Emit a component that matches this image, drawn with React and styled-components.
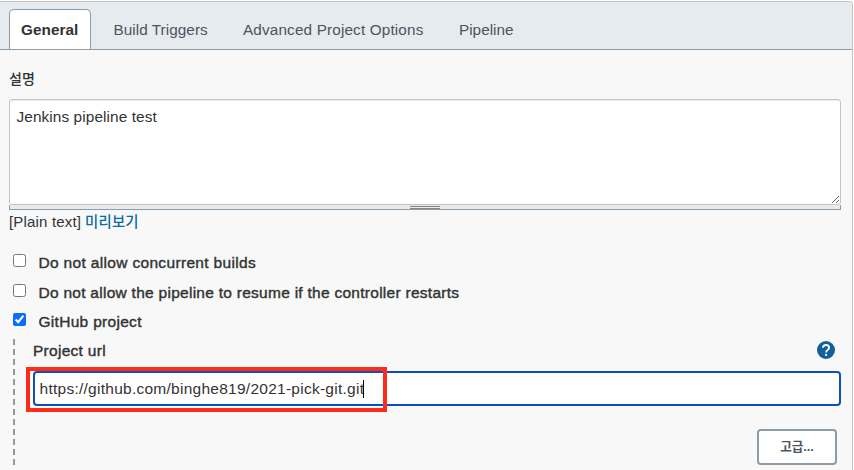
import React from 'react';
import styled, { createGlobalStyle, css } from 'styled-components';

const Global = createGlobalStyle`
  * { box-sizing: border-box; }
  body {
    margin: 0;
    background: #fff;
    overflow: hidden;
    color: #333;
    font: 15px/20px "Liberation Sans", "Noto Sans CJK KR", sans-serif;
  }
`;

const Page = styled.div`
  height: 470px;
  padding-top: 1px;
  overflow: hidden;
`;

const Panel = styled.main`
  width: 853px;
  height: 480px;
  border: 1px solid #c4c4c4;
  border-left: 0;
  border-radius: 0 4px 0 0;
  background: #f8f8f8;
  overflow: hidden;
`;

const TabBar = styled.nav`
  display: flex;
  align-items: flex-end;
  height: 48px;
  padding-left: 9px;
  background: #e6ebef;
  border-bottom: 1px solid #8c9ba5;
`;

const Tab = styled.a`
  width: ${(p) => p.$width}px;
  height: 40px;
  padding: 11px 0 0 ${(p) => p.$inset}px;
  color: #4d545d;
  white-space: nowrap;
  font-size: 15.3px;
  letter-spacing: ${(p) => p.$track || 0}px;
  ${(p) =>
    p.$active &&
    css`
      color: #333;
      font-weight: 700;
      background: #fff;
      border: 1px solid #8c9ba5;
      border-bottom: 0;
      border-radius: 5px 5px 0 0;
      padding-top: 10px;
    `}
`;

const Form = styled.form`
  display: flex;
  flex-direction: column;
  padding: 19px 11px 0 9px;
`;

const Medium = styled.span`
  -webkit-text-stroke: 0.4px currentColor;
  font-size: 15.5px;
  letter-spacing: ${(p) => p.$track || 0}px;
  white-space: nowrap;
`;

const KoreanLabel = styled.label`
  height: 30px;
  font-size: 14px;
  font-weight: 500;
`;

const Description = styled.textarea`
  display: block;
  width: 832px;
  height: 106px;
  margin: 0;
  padding: 7px 6.5px;
  border: 1px solid #c4c4c4;
  border-radius: 3px;
  outline: 0;
  background: #fff;
  box-shadow: inset 0 1px 1px rgba(0, 0, 0, 0.075);
  color: #333;
  font: inherit;
  font-size: 15.4px;
  letter-spacing: 0.08px;
  resize: vertical;
`;

const ResizeStrip = styled.div`
  display: flex;
  justify-content: center;
  width: 832px;
  height: 5px;
  padding-top: 1px;
  background: #e6ebef;
  border: 1px solid #8c9ba5;
  border-top: 0;
`;

const Grip = styled.span`
  width: 30px;
  height: 3px;
  border: 1px solid #84867f;
  border-width: 1px 0;
`;

const FormatRow = styled.div`
  display: flex;
  gap: 4px;
  height: 44px;
  padding-top: 2px;
  letter-spacing: 0.17px;
`;

const PreviewLink = styled.a`
  color: #0b6aa2;
  font-size: 14.4px;
  font-weight: 500;
`;

const CheckRow = styled.label`
  display: flex;
  align-items: flex-start;
  height: ${(p) => p.$height}px;
`;

const Checkbox = styled.input`
  width: 13px;
  height: 13px;
  margin: 0 12.5px 0 4px;
  accent-color: #0b6cff;
`;

const CheckText = styled(Medium)`
  line-height: 18px;
`;

const Nested = styled.section`
  display: flex;
  margin-left: 4px;
  height: 127px;
`;

const DashedRail = styled.div`
  width: 2px;
  margin-right: 18px;
  background: repeating-linear-gradient(#999 0 6px, transparent 6px 10px);
`;

const Fields = styled.div`
  width: 808px;
`;

const FieldHeader = styled.div`
  display: flex;
  justify-content: space-between;
  height: 32px;
  padding: 2px 6px 0 0;
`;

const UrlWrap = styled.div`
  position: relative;
`;

const UrlBox = styled.div`
  position: relative;
  display: flex;
  align-items: center;
  height: 35px;
  padding-left: 4.5px;
  border: 2px solid #0b50be;
  border-radius: 4px;
  background: #fff;
  white-space: nowrap;
  font-size: 15.5px;
  letter-spacing: 0.26px;
`;

const Caret = styled.span`
  width: 1px;
  height: 18px;
  margin-left: -1px;
  background: #000;
`;

const Highlight = styled.div`
  position: absolute;
  left: -7px;
  top: -4px;
  width: 361px;
  height: 45px;
  border: 4px solid #ff2c1c;
`;

const HighlightBacking = styled(Highlight)`
  background: #fff;
`;

const ButtonRow = styled.div`
  display: flex;
  justify-content: flex-end;
  padding: 23px 4px 0 0;
`;

const Button = styled.button`
  width: 80px;
  height: 36px;
  padding: 0;
  border: 2px solid #8c9ba5;
  border-radius: 4px;
  background: #fff;
  color: #4d545d;
  font: 700 12.6px/18px "Liberation Sans", "Noto Sans CJK KR", sans-serif;
`;

const HelpIcon = () => (
  <svg width="18" height="18" viewBox="0 0 18 18" aria-label="Help">
    <circle cx="9" cy="9" r="9" fill="#135f99" />
    <path
      d="M6 6.8C6 4.9 7.2 4 9 4s3.1 1 3.1 2.8c0 2-3 2.3-3 4.6"
      fill="none"
      stroke="#fff"
      strokeWidth="1.8"
    />
    <rect x="8.1" y="12.9" width="1.9" height="1.9" fill="#fff" />
  </svg>
);

const tabs = [
  { name: 'General', width: 82, inset: 11, active: true, track: 0.05 },
  { name: 'Build Triggers', width: 129, inset: 22.5, track: 0.05 },
  { name: 'Advanced Project Options', width: 216, inset: 23, track: 0.15 },
  { name: 'Pipeline', width: 90, inset: 23, track: 0.01 },
];

const options = [
  { text: 'Do not allow concurrent builds', height: 30, track: 0.33 },
  { text: 'Do not allow the pipeline to resume if the controller restarts', height: 29, track: 0.27 },
  { text: 'GitHub project', height: 26, checked: true, track: 0.3 },
];

export default function App() {
  return (
    <Page>
      <Global />
      <Panel>
        <TabBar>
          {tabs.map((t) => (
            <Tab key={t.name} $width={t.width} $inset={t.inset} $active={t.active} $track={t.track}>
              {t.name}
            </Tab>
          ))}
        </TabBar>
        <Form>
          <KoreanLabel>설명</KoreanLabel>
          <Description defaultValue="Jenkins pipeline test" spellCheck={false} />
          <ResizeStrip>
            <Grip />
          </ResizeStrip>
          <FormatRow>
            <span>[Plain text]</span>
            <PreviewLink>미리보기</PreviewLink>
          </FormatRow>
          {options.map((o) => (
            <CheckRow key={o.text} $height={o.height}>
              <Checkbox type="checkbox" defaultChecked={o.checked} />
              <CheckText $track={o.track}>{o.text}</CheckText>
            </CheckRow>
          ))}
          <Nested>
            <DashedRail />
            <Fields>
              <FieldHeader>
                <Medium $track={0.28}>Project url</Medium>
                <HelpIcon />
              </FieldHeader>
              <UrlWrap>
                <HighlightBacking />
                <UrlBox>
                  https://github.com/binghe819/2021-pick-git.git
                  <Caret />
                </UrlBox>
                <Highlight />
              </UrlWrap>
              <ButtonRow>
                <Button type="button">고급...</Button>
              </ButtonRow>
            </Fields>
          </Nested>
        </Form>
      </Panel>
    </Page>
  );
}
